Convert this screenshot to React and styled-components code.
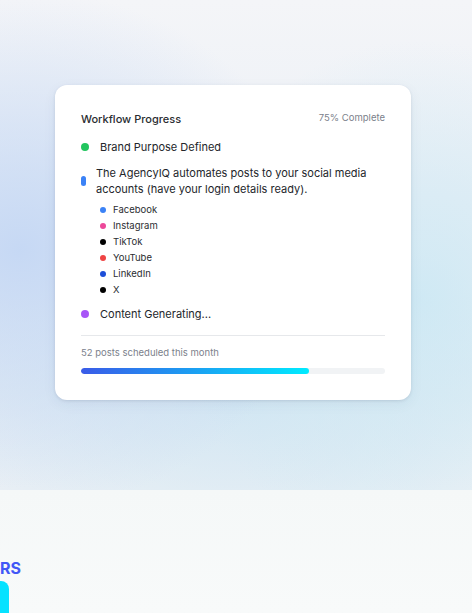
import React from 'react';
import styled, { createGlobalStyle } from 'styled-components';

const GlobalStyle = createGlobalStyle`
  html, body {
    margin: 0;
    padding: 0;
    background: #f7f9f9;
    font-family: Inter, "Noto Sans", "Liberation Sans", sans-serif;
    -webkit-font-smoothing: antialiased;
  }
`;

const platforms = [
  { name: 'Facebook', color: '#3b82f6' },
  { name: 'Instagram', color: '#ec4899' },
  { name: 'TikTok', color: '#000000' },
  { name: 'YouTube', color: '#ef4444' },
  { name: 'LinkedIn', color: '#1d4ed8' },
  { name: 'X', color: '#000000' },
];

const App = () => {
  const progress = 75;

  return (
    <>
      <GlobalStyle />
      <Hero>
        <Card>
          <Header>
            <Title>Workflow Progress</Title>
            <Percent>{progress}% Complete</Percent>
          </Header>

          <Step>
            <Dot color="#22c55e" />
            <StepText>Brand Purpose Defined</StepText>
          </Step>

          <Step $gap={10} $top={10}>
            <Pill />
            <StepText>
              The AgencyIQ automates posts to your social media accounts (have your login details ready).
            </StepText>
          </Step>

          <Platforms>
            {platforms.map(p => (
              <Platform key={p.name}>
                <SmallDot color={p.color} />
                <span>{p.name}</span>
              </Platform>
            ))}
          </Platforms>

          <Step $top={9}>
            <Dot color="#a855f7" />
            <StepText>Content Generating...</StepText>
          </Step>

          <Divider />

          <Scheduled>52 posts scheduled this month</Scheduled>
          <Track>
            <Fill style={{ width: `${progress}%` }} />
          </Track>
        </Card>
      </Hero>

      <Lower>
        <SectionLabel>RS</SectionLabel>
        <CtaButton />
      </Lower>
    </>
  );
};

export default App;

const Hero = styled.section`
  height: 490px;
  display: flex;
  justify-content: center;
  align-items: flex-start;
  padding-top: 85px;
  padding-right: 6px;
  box-sizing: border-box;
  background:
    radial-gradient(ellipse 300px 260px at 20px 250px, rgba(196, 215, 244, 0.95), rgba(196, 215, 244, 0) 100%),
    radial-gradient(ellipse 240px 260px at 420px 300px, rgba(203, 232, 244, 0.85), rgba(203, 232, 244, 0) 100%),
    radial-gradient(ellipse 320px 180px at 236px 400px, rgba(205, 228, 243, 0.8), rgba(205, 228, 243, 0) 100%),
    linear-gradient(180deg, #f4f5f8 0%, #ebf0f6 40%, #e9eff4 80%, #eef2f5 100%);
`;

const Card = styled.div`
  width: 356px;
  box-sizing: border-box;
  background: #fff;
  border-radius: 12px;
  padding: 26px 26px 26px;
  box-shadow: 0 1px 3px rgba(30, 50, 80, 0.12), 0 4px 14px rgba(30, 60, 100, 0.06);
  display: flex;
  flex-direction: column;
`;

const Header = styled.div`
  display: flex;
  justify-content: space-between;
  align-items: center;
  height: 16px;
`;

const Title = styled.div`
  font-size: 11px;
  font-weight: 500;
  color: #2a2d31;
  line-height: 16px;
`;

const Percent = styled.div`
  font-size: 9.5px;
  color: #7b818b;
  line-height: 16px;
  margin-top: -3px;
`;

const Step = styled.div`
  display: flex;
  align-items: center;
  gap: ${p => p.$gap ?? 11}px;
  margin-top: ${p => p.$top ?? 12}px;
`;

const StepText = styled.div`
  font-size: 11px;
  line-height: 16px;
  color: #23262b;
`;

const Dot = styled.span`
  width: 8px;
  height: 8px;
  border-radius: 50%;
  background: ${p => p.color};
  flex-shrink: 0;
`;

const Pill = styled.span`
  width: 5px;
  height: 10px;
  border-radius: 3px;
  background: #3b82f6;
  flex-shrink: 0;
`;

const Platforms = styled.ul`
  list-style: none;
  margin: 4px 0 0;
  padding: 0 0 0 19px;
`;

const Platform = styled.li`
  display: flex;
  align-items: center;
  gap: 7px;
  height: 16px;
  font-size: 9.5px;
  color: #2a2d31;
`;

const SmallDot = styled.span`
  width: 6px;
  height: 6px;
  border-radius: 50%;
  background: ${p => p.color};
  flex-shrink: 0;
  margin-top: 1px;
`;

const Divider = styled.div`
  height: 1px;
  background: #e6e8eb;
  margin-top: 13px;
`;

const Scheduled = styled.div`
  font-size: 9.5px;
  line-height: 16px;
  color: #7b818b;
  margin-top: 9px;
`;

const Track = styled.div`
  height: 6px;
  border-radius: 3px;
  background: #f1f3f5;
  margin-top: 7px;
  overflow: hidden;
`;

const Fill = styled.div`
  height: 100%;
  border-radius: 3px;
  background: linear-gradient(90deg, #3a5be8 0%, #1ba0f2 50%, #00ebff 100%);
`;

const Lower = styled.section`
  height: 123px;
  background: linear-gradient(180deg, #f5f8f8 0%, #f8fafa 100%);
  display: flex;
  flex-direction: column;
  justify-content: flex-end;
  align-items: flex-start;
`;

const SectionLabel = styled.div`
  font-size: 16px;
  font-weight: 700;
  color: #4157f6;
  line-height: 20px;
  margin-bottom: 3px;
`;

const CtaButton = styled.div`
  width: 9px;
  height: 32px;
  background: #06e2ff;
  border-radius: 0 8px 0 0;
`;
